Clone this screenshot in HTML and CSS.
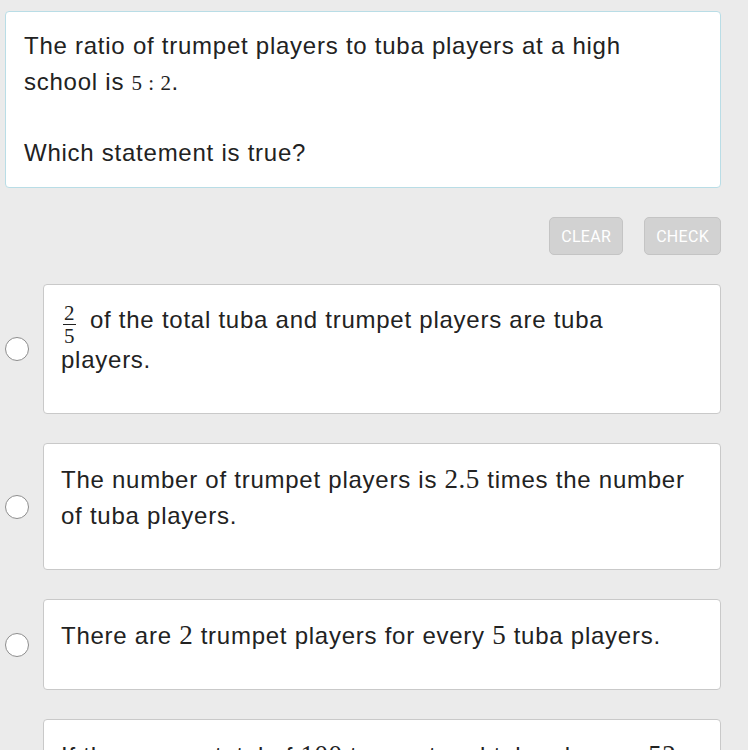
FILE: index.html
```html
<!DOCTYPE html>
<html>
<head>
<meta charset="utf-8">
<link rel="stylesheet" href="styles.css">
</head>
<body>
<div class="page">
  <div class="question">
    <p>The ratio of trumpet players to tuba players at a high school is <span class="m">5 : 2</span>.</p>
    <p>Which statement is true?</p>
  </div>
  <div class="actions">
    <button class="btn">CLEAR</button>
    <button class="btn">CHECK</button>
  </div>
  <div class="options">
    <div class="option">
      <span class="radio"></span>
      <div class="card">
        <p><span class="frac"><span class="num">2</span><span class="den">5</span></span> of the total tuba and trumpet players are tuba players.</p>
      </div>
    </div>
    <div class="option">
      <span class="radio"></span>
      <div class="card">
        <p>The number of trumpet players is <span class="m">2.5</span> times the number of tuba players.</p>
      </div>
    </div>
    <div class="option">
      <span class="radio"></span>
      <div class="card">
        <p>There are <span class="m">2</span> trumpet players for every <span class="m">5</span> tuba players.</p>
      </div>
    </div>
    <div class="option">
      <span class="radio"></span>
      <div class="card">
        <p>If there are a total of <span class="m">100</span> trumpet and tuba players, <span class="m">52</span> of them are tuba players.</p>
      </div>
    </div>
  </div>
</div>
</body>
</html>
```
FILE: styles.css
```css
html, body {
  margin: 0;
  padding: 0;
  background: #ebebeb;
  font-family: "Liberation Sans", Arial, sans-serif;
  color: #222;
  overflow: hidden;
}
.page {
  padding: 11px 27px 0 5px;
}
p {
  margin: 0;
  font-size: 24px;
  letter-spacing: 0.75px;
  line-height: 36px;
}
.question {
  background: #fff;
  border: 1px solid #b9dde6;
  border-radius: 4px;
  padding: 16px 24px 16px 18px;
}
.question p + p {
  margin-top: 34px;
}
.m {
  font-family: "Liberation Serif", "Times New Roman", serif;
  font-size: 27px;
  letter-spacing: 0.5px;
}
.question .m {
  font-size: 21px;
}
.actions {
  display: flex;
  justify-content: flex-end;
  gap: 21px;
  margin-top: 29px;
}
.btn {
  height: 38px;
  padding: 0 11px;
  background: #d2d2d2;
  border: 1.5px solid #c4c4c4;
  border-radius: 5px;
  color: #fff;
  font-family: Roboto, "Open Sans", sans-serif;
  font-size: 16px;
  letter-spacing: 0.3px;
}
.options {
  display: flex;
  flex-direction: column;
  gap: 29px;
  margin-top: 29px;
}
.option {
  display: flex;
  align-items: center;
  gap: 14px;
}
.radio {
  flex: none;
  width: 22px;
  height: 22px;
  border: 1px solid #8d8d8d;
  border-radius: 50%;
  background: #fff;
}
.card {
  flex: 1;
  background: #fff;
  border: 1px solid #c9c9c9;
  border-radius: 4px;
  padding: 17px 22px 35px 17px;
}
.card-tight {
  padding-bottom: 34px;
}
.frac {
  display: inline-flex;
  flex-direction: column;
  align-items: center;
  vertical-align: middle;
  font-family: "Liberation Serif", "Times New Roman", serif;
  font-size: 21px;
  line-height: 18px;
  letter-spacing: 0;
  margin: 2px 7px -3px 2px;
}
.frac .num {
  border-bottom: 1px solid #222;
  padding: 0 1px 2px;
}
.frac .den {
  padding-top: 2px;
}
```
